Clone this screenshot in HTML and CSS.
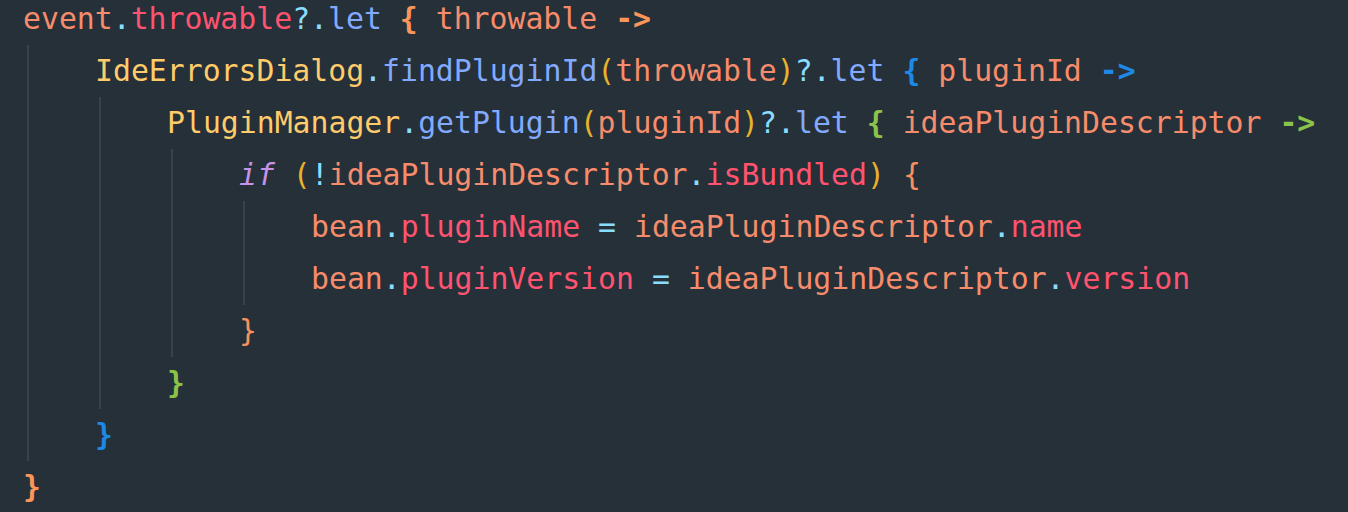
FILE: index.html
```html
<!DOCTYPE html>
<html>
<head>
<meta charset="utf-8">
<link rel="stylesheet" href="styles.css">
</head>
<body>
<div class="code">
  <div class="line"><span class="v">event</span><span class="o">.</span><span class="p">throwable</span><span class="o">?.</span><span class="f">let</span> <span class="b1">{</span> <span class="v">throwable</span> <span class="b1">-&gt;</span></div>
  <div class="block">
    <div class="line"><span class="c">IdeErrorsDialog</span><span class="o">.</span><span class="f">findPluginId</span><span class="pa">(</span><span class="v">throwable</span><span class="pa">)</span><span class="o">?.</span><span class="f">let</span> <span class="b2">{</span> <span class="v">pluginId</span> <span class="b2">-&gt;</span></div>
    <div class="block">
      <div class="line"><span class="c">PluginManager</span><span class="o">.</span><span class="f">getPlugin</span><span class="pa">(</span><span class="v">pluginId</span><span class="pa">)</span><span class="o">?.</span><span class="f">let</span> <span class="b3">{</span> <span class="v">ideaPluginDescriptor</span> <span class="b3">-&gt;</span></div>
      <div class="block">
        <div class="line"><span class="k">if</span> <span class="pa">(</span><span class="o">!</span><span class="v">ideaPluginDescriptor</span><span class="o">.</span><span class="p">isBundled</span><span class="pa">)</span> <span class="b4">{</span></div>
        <div class="block">
          <div class="line"><span class="v">bean</span><span class="o">.</span><span class="p">pluginName</span> <span class="o">=</span> <span class="v">ideaPluginDescriptor</span><span class="o">.</span><span class="p">name</span></div>
          <div class="line"><span class="v">bean</span><span class="o">.</span><span class="p">pluginVersion</span> <span class="o">=</span> <span class="v">ideaPluginDescriptor</span><span class="o">.</span><span class="p">version</span></div>
        </div>
        <div class="line"><span class="b4">}</span></div>
      </div>
      <div class="line"><span class="b3">}</span></div>
    </div>
    <div class="line"><span class="b2">}</span></div>
  </div>
  <div class="line"><span class="b1">}</span></div>
</div>
</body>
</html>
```

FILE: styles.css
```css
html, body {
  margin: 0;
  padding: 0;
  background: #263038;
  overflow: hidden;
}
.code {
  margin-top: -7px;
  padding-left: 23px;
  font-family: "DejaVu Sans Mono", "Liberation Mono", monospace;
  font-size: 29.8px;
  line-height: 52px;
  color: #f78c6c;
}
.line {
  height: 52px;
  white-space: pre;
}
.block {
  margin-left: 4px;
  border-left: 2px solid #36434d;
  padding-left: 66px;
}
.v { color: #f78c6c; }
.p { color: #ff5370; }
.o { color: #89ddff; }
.f { color: #82aaff; }
.c { color: #ffcb6b; }
.pa { color: #e8b22a; }
.k { color: #c792ea; font-style: italic; }
.b1 { color: #fb955a; font-weight: bold; }
.b2 { color: #1e88e5; font-weight: bold; }
.b3 { color: #8bc34a; font-weight: bold; }
.b4 { color: #f8915f; }
```
